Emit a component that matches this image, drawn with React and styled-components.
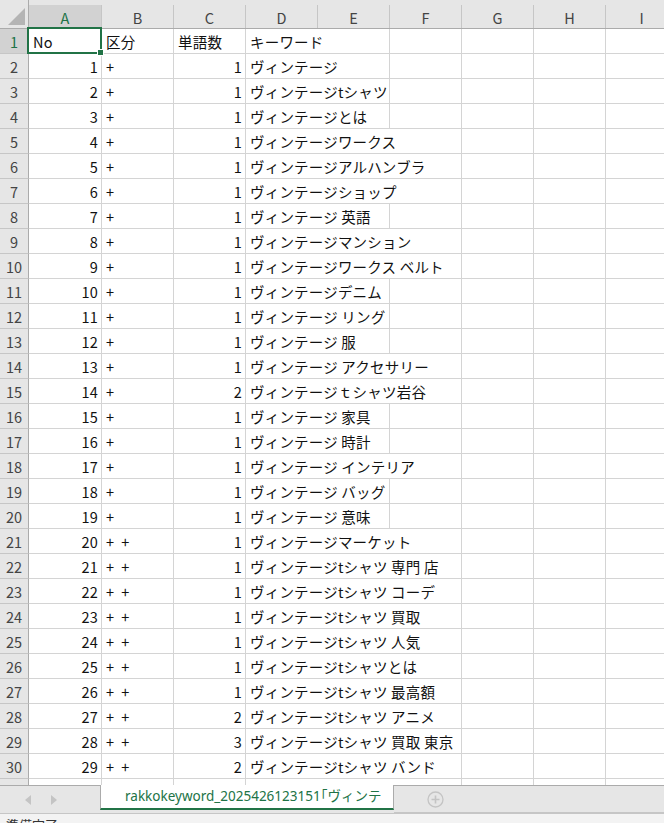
import React from "react";
import styled, { createGlobalStyle } from "styled-components";

const GlobalStyle = createGlobalStyle`
  html, body {
    margin: 0;
    padding: 0;
    overflow: hidden;
    background: #ffffff;
  }
  * {
    box-sizing: border-box;
  }
`;

const FONT = `"Noto Sans CJK JP", "Noto Sans", sans-serif`;
const COL_W = 72;
const GREEN = "#217346";

const Window = styled.div`
  width: 664px;
  height: 823px;
  overflow: hidden;
  display: flex;
  flex-direction: column;
  font-family: ${FONT};
  color: #000;
`;

const Sheet = styled.div`
  height: 785px;
  flex: none;
  overflow: hidden;
  display: flex;
  flex-direction: column;
`;

const TopStrip = styled.div`
  height: 5px;
  flex: none;
  background: #e6e6e6;
  display: flex;
`;

const HeaderRow = styled.div`
  height: 24px;
  flex: none;
  display: flex;
  background: #e6e6e6;
  border-bottom: 1px solid #ababab;
`;

const Corner = styled.div`
  width: 29px;
  flex: none;
  display: flex;
  align-items: flex-end;
  justify-content: flex-end;
  padding: 0 3px 3px 0;
  border-right: 1px solid #ababab;
  margin-top: -5px;
  position: relative;
  z-index: 1;
  background: #e6e6e6;
`;

const ColHead = styled.div`
  width: ${(p) => p.$w}px;
  flex: none;
  display: flex;
  align-items: center;
  justify-content: center;
  font-size: 14.5px;
  color: ${(p) => (p.$active ? GREEN : "#444")};
  background: ${(p) => (p.$active ? "#d2d2d2" : "#e6e6e6")};
  border-right: 1px solid #c6c6c6;
  padding-top: 1px;
`;

const Row = styled.div`
  height: 25px;
  flex: none;
  display: flex;
`;

const RowHead = styled.div`
  width: 29px;
  flex: none;
  display: flex;
  align-items: center;
  justify-content: center;
  font-size: 14.5px;
  color: ${(p) => (p.$active ? GREEN : "#444")};
  background: ${(p) => (p.$active ? "#d2d2d2" : "#e6e6e6")};
  border-right: 1px solid #ababab;
  border-bottom: 1px solid #c6c6c6;
`;

const Cell = styled.div`
  width: ${(p) => p.$w}px;
  flex: none;
  display: flex;
  align-items: center;
  justify-content: ${(p) => (p.$right ? "flex-end" : "flex-start")};
  padding: ${(p) => (p.$right ? "0 3px 0 0" : "0 0 0 4px")};
  font-size: 14.5px;
  letter-spacing: ${(p) => (p.$spaced ? "2px" : "0.2px")};
  white-space: nowrap;
  overflow: hidden;
  color: #111;
  border-right: 1px solid #d4d4d4;
  border-bottom: 1px solid #d4d4d4;
  position: relative;
`;

const Selection = styled.div`
  position: absolute;
  left: -2px;
  top: -2px;
  right: -1px;
  bottom: -1px;
  border: 2px solid ${GREEN};
  pointer-events: none;
`;

const Handle = styled.div`
  position: absolute;
  right: -4px;
  bottom: -4px;
  width: 7px;
  height: 7px;
  background: ${GREEN};
  border: 1px solid #fff;
`;

const SelectedCell = styled(Cell)`
  overflow: visible;
  z-index: 2;
`;

const TabBar = styled.div`
  height: 28px;
  flex: none;
  display: flex;
  background: #e6e6e6;
`;

const NavArea = styled.div`
  width: 100px;
  flex: none;
  display: flex;
  align-items: center;
  gap: 20px;
  padding-left: 25px;
  border-top: 1px solid #ababab;
`;

const ActiveTab = styled.div`
  width: 294px;
  flex: none;
  display: flex;
  align-items: center;
  padding: 0 0 3px 24px;
  background: #fff;
  color: ${GREEN};
  font-family: "Noto Sans", "Noto Sans CJK JP", sans-serif;
  font-size: 13.5px;
  white-space: nowrap;
  overflow: hidden;
  border-left: 1px solid #ababab;
  border-right: 1px solid #ababab;
  border-bottom: 2px solid ${GREEN};
  margin-bottom: 3px;
`;

const TabRest = styled.div`
  flex: 1;
  display: flex;
  align-items: center;
  padding-left: 33px;
  border-top: 1px solid #ababab;
  border-bottom: 1px solid #c6c6c6;
`;

const StatusBar = styled.div`
  height: 22px;
  flex: none;
  background: #f3f3f3;
  border-top: 1px solid #c6c6c6;
  display: flex;
  align-items: center;
  padding-left: 6px;
  font-size: 13px;
  color: #333;
`;

const cols = ["A", "B", "C", "D", "E", "F", "G", "H", "I"];
const widths = [73, 72, 72, 72, 72, 72, 72, 72, 72];

const data = [
  ["1", "+", "1", "ヴィンテージ", 2],
  ["2", "+", "1", "ヴィンテージtシャツ", 2],
  ["3", "+", "1", "ヴィンテージとは", 2],
  ["4", "+", "1", "ヴィンテージワークス", 3],
  ["5", "+", "1", "ヴィンテージアルハンブラ", 3],
  ["6", "+", "1", "ヴィンテージショップ", 3],
  ["7", "+", "1", "ヴィンテージ 英語", 2],
  ["8", "+", "1", "ヴィンテージマンション", 3],
  ["9", "+", "1", "ヴィンテージワークス ベルト", 3],
  ["10", "+", "1", "ヴィンテージデニム", 2],
  ["11", "+", "1", "ヴィンテージ リング", 2],
  ["12", "+", "1", "ヴィンテージ 服", 2],
  ["13", "+", "1", "ヴィンテージ アクセサリー", 3],
  ["14", "+", "2", "ヴィンテージｔシャツ岩谷", 3],
  ["15", "+", "1", "ヴィンテージ 家具", 2],
  ["16", "+", "1", "ヴィンテージ 時計", 2],
  ["17", "+", "1", "ヴィンテージ インテリア", 3],
  ["18", "+", "1", "ヴィンテージ バッグ", 2],
  ["19", "+", "1", "ヴィンテージ 意味", 2],
  ["20", "+ +", "1", "ヴィンテージマーケット", 3],
  ["21", "+ +", "1", "ヴィンテージtシャツ 専門 店", 3],
  ["22", "+ +", "1", "ヴィンテージtシャツ コーデ", 3],
  ["23", "+ +", "1", "ヴィンテージtシャツ 買取", 3],
  ["24", "+ +", "1", "ヴィンテージtシャツ 人気", 3],
  ["25", "+ +", "1", "ヴィンテージtシャツとは", 3],
  ["26", "+ +", "1", "ヴィンテージtシャツ 最高額", 3],
  ["27", "+ +", "2", "ヴィンテージtシャツ アニメ", 3],
  ["28", "+ +", "3", "ヴィンテージtシャツ 買取 東京", 3],
  ["29", "+ +", "2", "ヴィンテージtシャツ バンド", 3],
  ["30", "+ +", "2", "ヴィンテージtシャツ ロゴ", 3],
];

function CornerTriangle() {
  return (
    <svg width="17" height="17" viewBox="0 0 17 17">
      <polygon points="17,0 17,17 0,17" fill="#b4b4b4" />
    </svg>
  );
}

function Arrow({ dir }) {
  const pts = dir === "left" ? "6,0 6,10 0,5" : "0,0 0,10 6,5";
  return (
    <svg width="6" height="10" viewBox="0 0 6 10">
      <polygon points={pts} fill="#c4c4c4" />
    </svg>
  );
}

function AddSheet() {
  return (
    <svg width="17" height="17" viewBox="0 0 17 17">
      <circle cx="8.5" cy="8.5" r="7.5" fill="none" stroke="#c4c4c4" strokeWidth="1.3" />
      <path d="M8.5 4.5v8M4.5 8.5h8" stroke="#c4c4c4" strokeWidth="1.6" />
    </svg>
  );
}

function DataRow({ n, no, kubun, count, keyword, span }) {
  const rest = [];
  for (let i = 3 + span; i < cols.length; i++) {
    rest.push(<Cell key={cols[i]} $w={widths[i]} />);
  }
  return (
    <Row>
      <RowHead>{n}</RowHead>
      <Cell $w={widths[0]} $right>{no}</Cell>
      <Cell $w={widths[1]} $spaced>{kubun}</Cell>
      <Cell $w={widths[2]} $right>{count}</Cell>
      <Cell $w={COL_W * span}>{keyword}</Cell>
      {rest}
    </Row>
  );
}

export default function App() {
  return (
    <>
      <GlobalStyle />
      <Window>
        <Sheet>
          <TopStrip />
          <HeaderRow>
            <Corner>
              <CornerTriangle />
            </Corner>
            {cols.map((c, i) => (
              <ColHead key={c} $w={widths[i]} $active={c === "A"}>
                {c}
              </ColHead>
            ))}
          </HeaderRow>
          <Row>
            <RowHead $active>1</RowHead>
            <SelectedCell $w={widths[0]}>
              No
              <Selection>
                <Handle />
              </Selection>
            </SelectedCell>
            <Cell $w={widths[1]}>区分</Cell>
            <Cell $w={widths[2]}>単語数</Cell>
            <Cell $w={COL_W * 2}>キーワード</Cell>
            {cols.slice(5).map((c, i) => (
              <Cell key={c} $w={widths[i + 5]} />
            ))}
          </Row>
          {data.map(([no, kubun, count, keyword, span], i) => (
            <DataRow
              key={no}
              n={i + 2}
              no={no}
              kubun={kubun}
              count={count}
              keyword={keyword}
              span={span}
            />
          ))}
        </Sheet>
        <TabBar>
          <NavArea>
            <Arrow dir="left" />
            <Arrow dir="right" />
          </NavArea>
          <ActiveTab>rakkokeyword_2025426123151｢ヴィンテ</ActiveTab>
          <TabRest>
            <AddSheet />
          </TabRest>
        </TabBar>
        <StatusBar>準備完了</StatusBar>
      </Window>
    </>
  );
}
